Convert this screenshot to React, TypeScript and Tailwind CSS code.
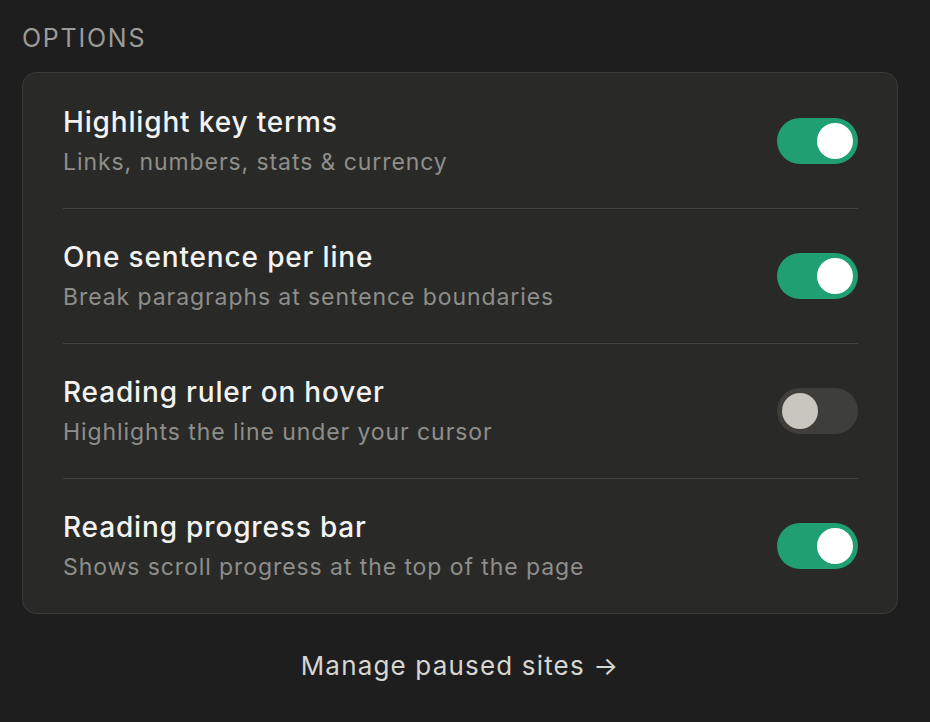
import { useState } from "react";

const options = [
  { title: "Highlight key terms", desc: "Links, numbers, stats & currency", on: true },
  { title: "One sentence per line", desc: "Break paragraphs at sentence boundaries", on: true },
  { title: "Reading ruler on hover", desc: "Highlights the line under your cursor", on: false },
  { title: "Reading progress bar", desc: "Shows scroll progress at the top of the page", on: true },
];

const Toggle = ({ on, onClick }: { on: boolean; onClick: () => void }) => (
  <button
    onClick={onClick}
    className={
      on
        ? "flex items-center justify-end w-[81px] h-[46px] px-[5px] rounded-full bg-[#1f9f72] shrink-0"
        : "flex items-center justify-start w-[81px] h-[46px] px-[5px] rounded-full bg-[#3e3e3a] shrink-0"
    }
  >
    <span
      className={
        on
          ? "block w-[36px] h-[36px] rounded-full bg-white"
          : "block w-[36px] h-[36px] rounded-full bg-[#c9c6c0]"
      }
    />
  </button>
);

const App = () => {
  const [state, setState] = useState(options.map((o) => o.on));

  return (
    <div
      className="w-[930px] h-[722px] bg-[#1e1e1e] pl-[22px] pr-[32px] pt-[22px]"
      style={{ fontFamily: "Inter, 'Noto Sans', sans-serif" }}
    >
      <div className="text-[25px] leading-[32px] tracking-[0.07em] text-[#9b9b98]">OPTIONS</div>
      <div className="mt-[18px] bg-[#292928] border border-[#3a3a39] rounded-[14px] pl-[40px] pr-[39px]">
        {options.map((o, i) => (
          <div
            key={i}
            className={
              i === 0
                ? "flex items-center justify-between h-[135px]"
                : "flex items-center justify-between h-[135px] border-t border-[#424241]"
            }
          >
            <div className="flex flex-col">
              <div className="text-[28px] leading-[36px] font-medium tracking-[0.03em] text-[#f3f3f1]">
                {o.title}
              </div>
              <div className="mt-[6px] text-[23px] leading-[32px] tracking-[0.04em] text-[#8e8e8b]">
                {o.desc}
              </div>
            </div>
            <Toggle
              on={state[i]}
              onClick={() => setState(state.map((s, j) => (j === i ? !s : s)))}
            />
          </div>
        ))}
      </div>
      <div className="flex justify-center mt-[34px]">
        <span className="text-[26px] leading-[36px] tracking-[0.045em] text-[#d6d6d3]">
          Manage paused sites →
        </span>
      </div>
    </div>
  );
};

export default App;
